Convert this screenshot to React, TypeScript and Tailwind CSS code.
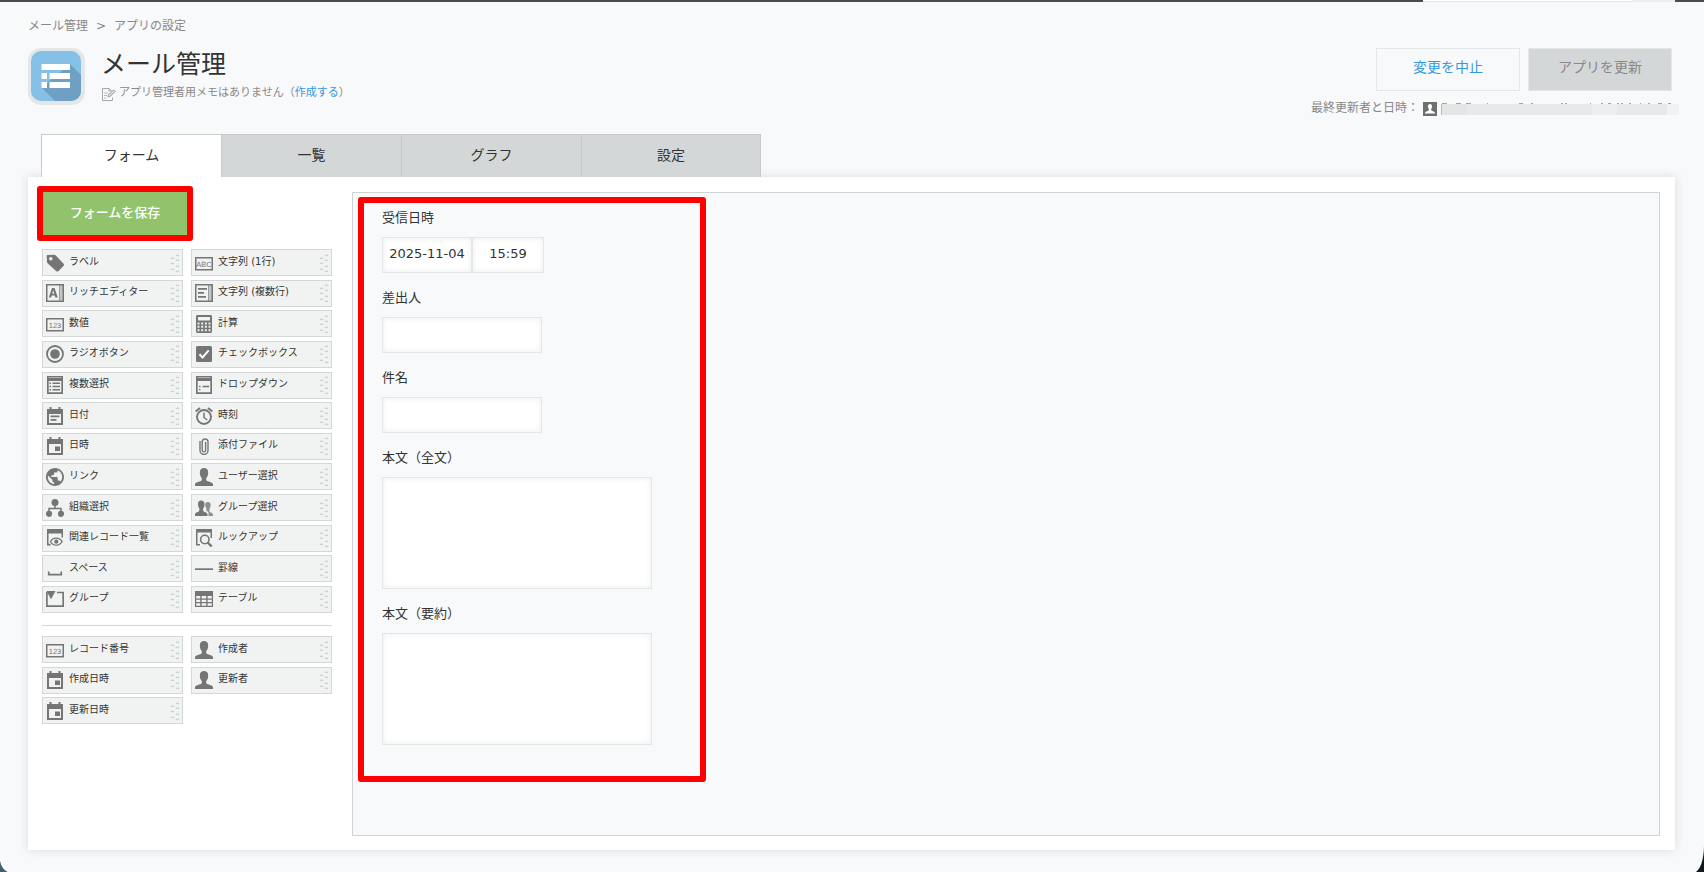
import type { ReactNode } from "react";
import clsx from "clsx";

/* ---------- icons ---------- */

function Glyph({ children }: { children: ReactNode }) {
  return (
    <svg viewBox="0 0 18 18" className="size-[18px] shrink-0 text-[#757575]" fill="currentColor" aria-hidden="true">
      {children}
    </svg>
  );
}

const boxedText = (text: string) => (
  <>
    <rect x="0.75" y="3.750" width="16.5" height="12" fill="none" stroke="currentColor" strokeWidth="1.5" />
    <text x="9" y="12.800" textAnchor="middle" fontSize="7.500" fontFamily="'Liberation Sans', sans-serif" textRendering="geometricPrecision">
      {text}
    </text>
  </>
);

const person = (
  <path d="M9 0C6.2 0 4.8 1.8 4.8 4.4c0 2.8 1 4.6 2 5.6 0 1.8 0 2.600-.8 3C4 13.800.4 14.300 0 16v2h18v-2c-.4-1.700-4-2.200-6-3-.8-.4-.8-1.200-.8-3 1-1 2-2.800 2-5.600C13.200 1.800 11.800 0 9 0z" />
);

const calendarTime = (
  <>
    <path fillRule="evenodd" d="M3.500 0h2v2h7V0h2v2H17v16H1V2h2.500zM3 7v9h12V7z" />
    <path d="M9 9.500h5V14H9z" />
  </>
);

const icons: Record<string, ReactNode> = {
  label: (
    <path fillRule="evenodd" d="M1.500 1 8 .7c.8 0 1.300.2 1.800.7l7.600 8c.8.800.8 1.700 0 2.500l-4.800 5c-.8.800-1.700.8-2.500 0L1.800 9.500C1.300 9 1 8.400 1 7.700L.7 2C.7 1.400 1 1 1.500 1zM4.800 3a1.800 1.800 0 1 0 0 3.600 1.800 1.800 0 0 0 0-3.600z" />
  ),
  richText: (
    <>
      <path fillRule="evenodd" d="M0 0h18v18H0zM1.500 1.500v15H13v-15z" />
      <path fill="#c4c6c6" d="M13.500 1.500h3v15h-3z" />
      <path fillRule="evenodd" d="M6 4h2.600l3.200 9.500H9.400l-.6-2H5.700l-.6 2H2.800zM7.300 6.300 6.200 9.700h2.100z" />
    </>
  ),
  text: boxedText("ABC"),
  number: boxedText("123"),
  multiline: (
    <>
      <path fillRule="evenodd" d="M0 0h18v18H0zM1.500 1.500v15H13v-15z" />
      <path fill="#c4c6c6" d="M13.500 1.500h3v15h-3z" />
      <path d="M3 4h9v1.800H3zM3 8h6v1.800H3zM3 12h8v1.800H3z" />
    </>
  ),
  calc: (
    <path fillRule="evenodd" d="M2.500 0h13c.8 0 1.500.7 1.500 1.500v15c0 .8-.7 1.500-1.500 1.500h-13C1.700 18 1 17.300 1 16.500v-15C1 .7 1.700 0 2.500 0zM3 2v3.500h12V2zM2.500 7.500v2h2v-2zm3.700 0v2h2v-2zm3.700 0v2h2v-2zm3.600 0v2h2v-2zm-11 3.300v2h2v-2zm3.700 0v2h2v-2zm3.700 0v2h2v-2zm3.600 0v2h2v-2zm-11 3.400v2h2v-2zm3.700 0v2h2v-2zm3.700 0v2h2v-2zm3.600 0v2h2v-2z" />
  ),
  radio: (
    <>
      <circle cx="9" cy="9" r="8" fill="none" stroke="currentColor" strokeWidth="1.800" />
      <circle cx="9" cy="9" r="4.800" />
    </>
  ),
  checkbox: (
    <>
      <rect x="1" y="1" width="16" height="16" rx="1.500" />
      <path d="m4.500 9.200 3 3.200 6.200-7" fill="none" stroke="#fff" strokeWidth="2" />
    </>
  ),
  multiSelect: (
    <path fillRule="evenodd" d="M1 0h16v18H1zM2.500 1.300v.5h13v-.5zM2.700 5v11.300h12.600V5zM3.500 6.500H5V8H3.500zm3 0H14V8H6.500zm-3 3.300H5v1.500H3.500zm3 0H14v1.500H6.500zm-3 3.200H5v1.500H3.500zm3 0H14v1.500H6.500z" />
  ),
  dropdown: (
    <path fillRule="evenodd" d="M1 0h16v18H1zM2.500 1.300v.5h13v-.5zM2.700 5v11.300h12.600V5zM4 9.800h1.500v1.500H4zm3.500 0H14v1.500H7.500zM4 13h1.500v1.200H4z" />
  ),
  date: (
    <>
      <path fillRule="evenodd" d="M3.500 0h2v2h7V0h2v2H17v16H1V2h2.500zM3 7v9h12V7z" />
      <path d="M4.500 8.500h9v1.700h-9zM4.500 12h6v1.700h-6z" />
    </>
  ),
  time: (
    <g fill="none" stroke="currentColor">
      <circle cx="9" cy="10" r="7" strokeWidth="1.900" />
      <path d="M9 5.500v5l3.200 2.500" strokeWidth="1.500" />
      <path d="M.7 4.500 5 .9M17.300 4.500 13 .9" strokeWidth="2" />
    </g>
  ),
  datetime: calendarTime,
  file: (
    <path d="M5 4v9.500a4 4 0 0 0 8 0V4.200a3 3 0 0 0-5.800 0v9a1.500 1.500 0 0 0 3.400 0V5" fill="none" stroke="currentColor" strokeWidth="1.400" />
  ),
  link: (
    <g transform="translate(-1.800 -1.800) scale(.9)">
      <path d="M12 2C6.480 2 2 6.480 2 12s4.480 10 10 10 10-4.480 10-10S17.520 2 12 2zm-1 17.930c-3.950-.49-7-3.850-7-7.930 0-.62.08-1.210.21-1.790L9 15v1c0 1.100.9 2 2 2v1.930zm6.900-2.540c-.26-.81-1-1.390-1.900-1.390h-1v-3c0-.55-.45-1-1-1H8v-2h2c.55 0 1-.45 1-1V7h2c1.100 0 2-.9 2-2v-.41c2.930 1.190 5 4.060 5 7.410 0 2.080-.8 3.970-2.100 5.390z" />
    </g>
  ),
  user: person,
  org: (
    <>
      <circle cx="9" cy="3.500" r="3.500" />
      <circle cx="3" cy="14.800" r="3.100" />
      <circle cx="15" cy="14.800" r="3.100" />
      <path d="M9 5v4.500M3 14V9.500h12V14" fill="none" stroke="currentColor" strokeWidth="1.500" />
    </>
  ),
  group: (
    <>
      <path opacity=".8" d="M12.500 3c-1.500 0-2.300 1-2.300 2.800 0 1.700.5 2.700 1.100 3.400v2l2.200 2.200V17H18v-1.500c-.2-1.300-1.800-1.700-3-2.200-.5-.3-.6-1.400-.5-3.600.7-.9 1.200-2.300 1.200-4C15.700 4 14.700 3 12.500 3z" />
      <path d="M6 1.500C4 1.500 3 3 3 5c0 2.200.6 3.600 1.400 4.400 0 1.600 0 2.600-.7 3C2.400 13 .2 13.500 0 15v2h12.500v-2c-.2-1.500-2.500-2-3.700-2.600-.7-.4-.7-1.400-.7-3C9 8.600 9.500 7.200 9.500 5 9.500 3 8.300 1.500 6 1.500z" />
    </>
  ),
  related: (
    <>
      <path d="M1 0h16v8.500h-1.500V4.500h-13v10.300h2.200v1.700H1z" />
      <path d="M4.500 12.500c1.300-2.300 3-3.400 5.700-3.400s4.600 1.100 5.900 3.400c-1.300 2.500-3.200 3.700-5.900 3.700s-4.400-1.200-5.700-3.700z" fill="#f1f3f3" stroke="currentColor" strokeWidth="1.300" />
      <circle cx="10.300" cy="12.700" r="2.100" />
    </>
  ),
  lookup: (
    <>
      <path d="M1 0h16v9h-1.500V3.500h-13V15H5v1.500H1z" />
      <circle cx="9.800" cy="10.500" r="4.200" fill="none" stroke="currentColor" strokeWidth="1.600" />
      <path d="m12.700 13.500 4 4" stroke="currentColor" strokeWidth="2.400" />
    </>
  ),
  space: <path d="M2.700 11.500v3.200h12.600v-3.200" fill="none" stroke="currentColor" strokeWidth="1.700" />,
  line: <path d="M0 8.300h18V10H0z" />,
  fieldGroup: (
    <>
      <path d="M11 2.500h6.200v13.700H.9V2" fill="none" stroke="currentColor" strokeWidth="1.700" />
      <path d="M.5 1h9L5 9.200z" />
    </>
  ),
  table: (
    <path fillRule="evenodd" d="M0 1h18v16H0zM1.200 6v2.500h4V6zm5.400 0v2.500h4.600V6zm6 0v2.500h4.200V6zM1.200 9.700V12h4V9.700zm5.400 0V12h4.600V9.700zm6 0V12h4.200V9.700zM1.200 13.200v2.500h4v-2.500zm5.400 0v2.500h4.600v-2.500zm6 0v2.500h4.200v-2.500z" />
  ),
};

function Grip() {
  const arcs = [[1, 6], [1, 11], [1, 17], [6, 3], [6, 8], [6, 14], [6, 19]];
  return (
    <svg viewBox="0 0 10 22" className="ml-auto h-[22px] w-[10px] shrink-0" aria-hidden="true">
      {arcs.map(([x, y]) => (
        <path key={`${x}-${y}`} d={`M${x} ${y + 1}q1.500-2 3 0`} fill="none" stroke="#c6caca" strokeWidth="1.100" />
      ))}
    </svg>
  );
}

function AppIcon() {
  return (
    <svg viewBox="0 0 57 57" className="size-[57px] shrink-0" aria-hidden="true">
      <defs>
        <clipPath id="app-icon-face">
          <rect x="3" y="3" width="50" height="50" rx="10" />
        </clipPath>
      </defs>
      <rect width="57" height="57" rx="13" fill="#e3e7e8" />
      <g clipPath="url(#app-icon-face)">
        <rect x="3" y="3" width="50" height="50" fill="#85c1e6" />
        <path d="M42 16 57 31v26H31L13.500 39.500z" fill="#6f9fc3" />
      </g>
      <path d="M13.500 16H42v6H13.500zM13.500 25H19v6h-5.500zM21.500 25H42v6H21.500zM13.500 34H19v6h-5.500zM21.500 34H42v6H21.500z" fill="#fff" />
    </svg>
  );
}

function MemoIcon() {
  return (
    <svg viewBox="0 0 14 14" className="mr-[3px] ml-px size-[14px] shrink-0 translate-y-px" fill="none" stroke="#a5a8a8" aria-hidden="true">
      <path d="M10.500 10.500v3H.5V1.500h6.500l2.500 2.500M7 1.500V4h2.500" />
      <path d="M2 6h4M2 8.500h3M2 11h2" strokeWidth=".8" />
      <path d="m6 9.800.6-2 5-4.600 1.400 1.400-5 4.600z" strokeWidth="1.100" />
    </svg>
  );
}

/* ---------- data ---------- */

const tabs = ["フォーム", "一覧", "グラフ", "設定"];

const fieldTypes = [
  ["label", "ラベル"],
  ["text", "文字列 (1行)"],
  ["richText", "リッチエディター"],
  ["multiline", "文字列 (複数行)"],
  ["number", "数値"],
  ["calc", "計算"],
  ["radio", "ラジオボタン"],
  ["checkbox", "チェックボックス"],
  ["multiSelect", "複数選択"],
  ["dropdown", "ドロップダウン"],
  ["date", "日付"],
  ["time", "時刻"],
  ["datetime", "日時"],
  ["file", "添付ファイル"],
  ["link", "リンク"],
  ["user", "ユーザー選択"],
  ["org", "組織選択"],
  ["group", "グループ選択"],
  ["related", "関連レコード一覧"],
  ["lookup", "ルックアップ"],
  ["space", "スペース"],
  ["line", "罫線"],
  ["fieldGroup", "グループ"],
  ["table", "テーブル"],
];

const systemFields = [
  ["number", "レコード番号"],
  ["user", "作成者"],
  ["datetime", "作成日時"],
  ["user", "更新者"],
  ["datetime", "更新日時"],
];

/* ---------- parts ---------- */

function Palette({ items, className }: { items: string[][]; className: string }) {
  return (
    <div className={clsx("grid grid-cols-2 content-between gap-x-2", className)}>
      {items.map(([icon, name]) => (
        <button
          key={name}
          type="button"
          className="flex h-[27px] cursor-move items-center border border-[#d4d7d7] bg-[#f1f3f3] pr-0.5 pl-[3px] text-[10px] text-[#333]"
        >
          <Glyph>{icons[icon]}</Glyph>
          <span className="ml-[5px] pb-0.5 leading-4 whitespace-nowrap">{name}</span>
          <Grip />
        </button>
      ))}
    </div>
  );
}

const inputStyle =
  "block h-9 border border-[#e3e7e8] bg-white pb-1 text-center text-[13px] text-[#333] shadow-[inset_0_0_6px_#eceeee] outline-none";

function Field({ id, label, children }: { id: string; label: string; children: ReactNode }) {
  return (
    <div className="mb-[15px]">
      <label htmlFor={id} className="mb-[9px] block text-[13px] leading-5 text-[#333]">
        {label}
      </label>
      {children}
    </div>
  );
}

function MaskedUpdater() {
  const marks = [[1, 5], [15, 3], [18, 2], [25, 5], [46, 1], [78, 4], [90, 2], [120, 2], [124, 2], [149, 1], [160, 2], [167, 3], [176, 2], [180, 2], [188, 2], [199, 1], [207, 2], [217, 4], [227, 3]];
  return (
    <svg viewBox="0 0 238 14" className="ml-1 h-[14px] w-[238px]" shapeRendering="crispEdges" aria-hidden="true">
      <path d="M0 3h238v11H0z" fill="#f1f2f4" />
      <path d="M0 3h226v11H0z" fill="#e8e9eb" />
      <path d="M151 3h25v11h-25z" fill="#edeef0" />
      <path d="M0 3h25v11H0z" fill="#e4e5e5" />
      <path d="M0 3h1v11H0z" fill="#bbb" />
      {marks.map(([x, w]) => (
        <rect key={x} x={x} y="2" width={w} height="1" fill="#a3a5a6" />
      ))}
    </svg>
  );
}

export default function App() {
  return (
    <div className="relative flex min-h-screen flex-col overflow-hidden bg-[#f8f9fb] font-['DejaVu_Sans','Noto_Sans_CJK_JP',sans-serif] text-[#333]">
      <div className="flex h-0.5 shrink-0 justify-end bg-[#4b4b4b]">
        <div className="w-[209px] border-b border-[#e3e7e8] bg-white" />
        <div className="mr-[29px] w-[43px] bg-[#ecedee]" />
      </div>

      <nav className="mt-4 flex gap-2 px-7 text-[12px] leading-4 text-[#888]">
        <a href="#app">メール管理</a>
        <span>&gt;</span>
        <a href="#settings">アプリの設定</a>
      </nav>

      <header className="mt-[14px] flex justify-between pr-[25px] pl-7">
        <div className="flex">
          <AppIcon />
          <div className="mt-px ml-4">
            <h1 className="text-[25px] leading-8">メール管理</h1>
            <div className="mt-1 flex items-center text-[11px] leading-4 text-[#888]">
              <MemoIcon />
              <p>
                アプリ管理者用メモはありません（
                <a href="#memo" className="text-[#3498db]">
                  作成する
                </a>
                ）
              </p>
            </div>
          </div>
        </div>

        <div>
          <div className="mr-[7px] flex justify-end gap-2 text-[14px]">
            <button type="button" className="h-[43px] w-36 border border-[#e3e7e8] bg-[#f8f9fb] pb-1 text-[#3498db]">
              変更を中止
            </button>
            <button type="button" className="h-[43px] w-36 border border-[#e3e7e8] bg-[#d4d7d7] pb-1 text-[#888]">
              アプリを更新
            </button>
          </div>
          <div className="mt-[9px] flex items-center text-[12px] leading-4 text-[#888]">
            <span>最終更新者と日時：</span>
            <svg viewBox="0 0 14 14" className="ml-1 size-[14px] translate-y-px" aria-hidden="true">
              <path d="M0 0h14v14H0z" fill="#6e7070" />
              <path d="M7 2C5.600 2 4.900 3 4.900 4.300c0 1.200.4 2 .9 2.600.1 1.400-.2 1.700-1 2C3.600 9.300 2.300 9.600 2 11v.5h10V11c-.3-1.400-1.600-1.700-2.800-2.100-.8-.3-1.100-.6-1-2 .5-.6.9-1.400.9-2.600C9.100 3 8.400 2 7 2z" fill="#fff" />
            </svg>
            <MaskedUpdater />
          </div>
        </div>
      </header>

      <div className="mt-[18px] ml-[41px] flex" role="tablist">
        {tabs.map((tab, i) => (
          <button
            key={tab}
            type="button"
            role="tab"
            aria-selected={i === 0}
            className={clsx(
              "relative h-[43px] w-[180px] border-t border-l border-[#c6caca] pb-0.5 text-[14px]",
              i === 0 ? "z-10 bg-white" : "bg-[#d4d7d7]",
              i === tabs.length - 1 && "border-r"
            )}
          >
            {tab}
          </button>
        ))}
      </div>

      <main className="mr-[29px] mb-[22px] ml-7 flex flex-1 bg-white pt-[9px] pr-[15px] pb-[14px] pl-[9px] shadow-[0_0_9px_#d8dbdc]">
        <aside className="w-[295px] shrink-0">
          {/* highlighted save button */}
          <div className="w-[156px] rounded-[3px] border-6 border-[#f00]">
            <button type="button" className="block h-[43px] w-full bg-[#91c36c] pb-0.5 text-[13px] font-medium text-white">
              フォームを保存
            </button>
          </div>
          <div className="mt-2 ml-[5px]">
            <Palette items={fieldTypes} className="h-[364px]" />
            <hr className="mt-3 mb-[10px] border-[#d4d7d7]" />
            <Palette items={systemFields} className="h-[88px]" />
          </div>
        </aside>

        <section className="mt-[6px] ml-5 flex-1 border border-[#d0d4d5] bg-[#f8f9fb] px-[5px] py-1">
          <form className="w-[348px] rounded-[3px] border-6 border-[#f00] pt-[5px] pb-4 pl-[18px]">
            <Field id="received" label="受信日時">
              <div className="flex">
                <input id="received" className={clsx(inputStyle, "w-[90px]")} defaultValue="2025-11-04" />
                <input aria-label="受信時刻" className={clsx(inputStyle, "w-[72px]")} defaultValue="15:59" />
              </div>
            </Field>
            <Field id="sender" label="差出人">
              <input id="sender" className={clsx(inputStyle, "w-40")} />
            </Field>
            <Field id="subject" label="件名">
              <input id="subject" className={clsx(inputStyle, "w-40")} />
            </Field>
            {[
              ["body", "本文（全文）"],
              ["summary", "本文（要約）"],
            ].map(([id, label]) => (
              <Field key={id} id={id} label={label}>
                <textarea
                  id={id}
                  className="block h-28 w-[270px] resize-none border border-[#e3e7e8] bg-white shadow-[inset_0_0_6px_#eceeee] outline-none"
                />
              </Field>
            ))}
          </form>
        </section>
      </main>

      {/* window corners */}
      <svg viewBox="0 0 8 11" className="absolute bottom-0 left-0 h-[11px] w-2" aria-hidden="true">
        <path d="M0 0q1.500 7.500 7.500 11H0z" fill="#41606b" />
      </svg>
      <svg viewBox="0 0 8 26" className="absolute right-0 bottom-0 h-[26px] w-2" aria-hidden="true">
        <path d="M8 0Q7.500 20 0 26h8z" fill="#101a1c" />
      </svg>
    </div>
  );
}
